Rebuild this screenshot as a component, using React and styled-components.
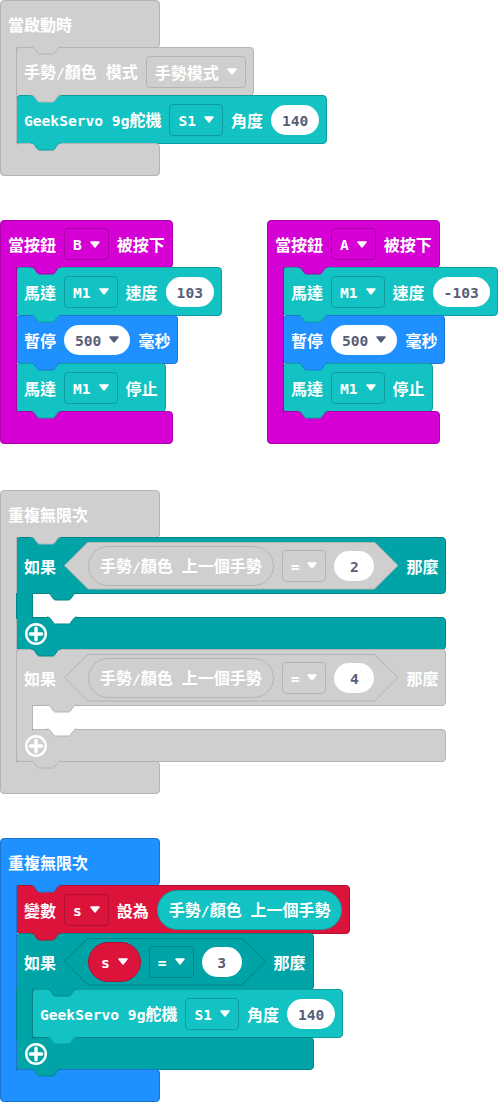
import React from 'react';
import styled, { createGlobalStyle } from 'styled-components';

const GlobalStyle = createGlobalStyle`
  *, *::before, *::after { box-sizing: border-box; }
  html, body { margin: 0; padding: 0; background: #ffffff; }
  body {
    width: 498px;
    height: 1103px;
    overflow: hidden;
    font-family: "Noto Sans CJK TC", "Noto Sans CJK SC", sans-serif;
  }
`;

const palette = {
  grey: { fill: '#cfcfcf', line: '#b4b4b4' },
  servo: { fill: '#13c2c2', line: '#0f9d9d' },
  event: { fill: '#d400d4', line: '#a800a8' },
  loop: { fill: '#1e90ff', line: '#1a76d2' },
  logic: { fill: '#00a4a6', line: '#008486' },
  vars: { fill: '#dc143c', line: '#b0102f' },
};

const INK = '#575e75';

const TAB_FILL = 'M0 0 C2 0 3 1 4 2.5 L6.5 6 C7 6.7 7.7 7 8.5 7 H21.5 C22.3 7 23 6.7 23.5 6 L26 2.5 C27 1 28 0 30 0 Z';
const TAB_EDGE = 'M0 0 C2 0 3 1 4 2.5 L6.5 6 C7 6.7 7.7 7 8.5 7 H21.5 C22.3 7 23 6.7 23.5 6 L26 2.5 C27 1 28 0 30 0';

const CJK = /([\u2e80-\u9fff\uf900-\ufaff\uff00-\uffef]+)/;

const Canvas = styled.div`
  position: relative;
  width: 498px;
  height: 1103px;
`;

// a stack's place on the workspace is the content itself
const Stack = styled.div`
  position: absolute;
  left: ${p => p.$x}px;
  top: ${p => p.$y}px;
`;

const Han = styled.span`
  font-family: "Noto Sans CJK TC", "Noto Sans CJK SC", sans-serif;
  font-size: 16px;
  font-weight: 700;
`;

const Lat = styled.span`
  font-family: "DejaVu Sans Mono", "Liberation Mono", monospace;
  font-size: 14.6px;
  font-weight: 700;
`;

const Label = styled.span`
  display: block;
  flex: none;
  white-space: pre;
  line-height: 20px;
  color: ${p => p.$ink || '#ffffff'};
`;

const CBlock = styled.div`
  display: flex;
  flex-direction: column;
  width: max-content;

  & > * + * { margin-top: -1px; }
`;

const Head = styled.div`
  position: relative;
  display: flex;
  align-items: center;
  gap: 8px;
  height: ${p => p.$h}px;
  min-width: ${p => p.$min || 0}px;
  padding: 0 7px;
  background: ${p => p.$c.fill};
  border: 1px solid ${p => p.$c.line};
  border-radius: 4px 4px 4px 0;
  white-space: nowrap;
`;

const Body = styled.div`
  display: flex;
`;

const Arm = styled.div`
  position: relative;
  z-index: 1;
  flex: none;
  width: 17px;
  margin-bottom: -1px;
  background: ${p => p.$c.fill};
  border-left: 1px solid ${p => p.$c.line};
  border-right: 1px solid ${p => p.$c.line};
`;

const Inner = styled.div`
  width: 0;
  margin-left: -1px;
  display: flex;
  flex-direction: column;
  align-items: flex-start;

  & > * + * { margin-top: -1px; }
`;

const Foot = styled.div`
  position: relative;
  display: flex;
  align-items: center;
  height: 33px;
  padding-left: 8px;
  background: ${p => p.$c.fill};
  border: 1px solid ${p => p.$c.line};
  border-radius: 0 4px 4px 4px;
`;

const Stmt = styled.div`
  position: relative;
  display: flex;
  align-items: center;
  gap: 8px;
  width: max-content;
  height: 49px;
  padding: 0 7px;
  background: ${p => p.$c.fill};
  border: 1px solid ${p => p.$c.line};
  border-radius: 4px;
  white-space: nowrap;
`;

const Slot = styled.div`
  position: relative;
  width: 40px;
  height: 25px;
`;

const TabSvg = styled.svg`
  position: absolute;
  z-index: 2;
  top: ${p => p.$top || '100%'};
  left: ${p => p.$left}px;
  width: 30px;
  height: 8px;
  overflow: visible;
  pointer-events: none;
`;

const Drop = styled.div`
  display: flex;
  align-items: center;
  gap: 8px;
  flex: none;
  height: 32px;
  padding: 0 8px;
  background: ${p => p.$c.fill};
  border: 1px solid ${p => p.$c.line};
  border-radius: 4px;
`;

const Num = styled.div`
  display: flex;
  align-items: center;
  justify-content: center;
  gap: 8px;
  flex: none;
  min-width: 40px;
  height: 30px;
  padding: 0 11px;
  background: #ffffff;
  border-radius: 15px;
`;

const Pill = styled.div`
  display: flex;
  align-items: center;
  gap: 8px;
  flex: none;
  height: 40px;
  padding: 0 ${p => p.$pad}px;
  background: ${p => p.$c.fill};
  border: 1px solid ${p => p.$c.line};
  border-radius: 20px;
`;

const Hex = styled.div`
  position: relative;
  isolation: isolate;
  display: flex;
  align-items: center;
  gap: 8px;
  flex: none;
  height: 48px;
  padding: 0 24px;

  &::before, &::after {
    content: '';
    position: absolute;
    z-index: -1;
  }
  &::before {
    inset: 0;
    background: ${p => p.$c.line};
    clip-path: polygon(0 50%, 24px 0, calc(100% - 24px) 0, 100% 50%, calc(100% - 24px) 100%, 24px 100%);
  }
  &::after {
    inset: 1px;
    background: ${p => p.$c.fill};
    clip-path: polygon(0 50%, 23.4px 0, calc(100% - 23.4px) 0, 100% 50%, calc(100% - 23.4px) 100%, 23.4px 100%);
  }
`;

function Txt({ t, ink }) {
  return (
    <Label $ink={ink}>
      {t.split(CJK).filter(Boolean).map((s, i) =>
        CJK.test(s) ? <Han key={i}>{s}</Han> : <Lat key={i}>{s}</Lat>
      )}
    </Label>
  );
}

function Caret({ color = '#ffffff' }) {
  return (
    <svg width="10" height="7" viewBox="0 0 10 7">
      <path d="M1 1h8L5 6z" fill={color} stroke={color} strokeWidth="1.5" strokeLinejoin="round" />
    </svg>
  );
}

function PlusIcon() {
  return (
    <svg width="22" height="22" viewBox="0 0 22 22">
      <circle cx="11" cy="11" r="9.8" fill="none" stroke="#ffffff" strokeWidth="2.4" />
      <path d="M11 5.3v11.4M5.3 11h11.4" stroke="#ffffff" strokeWidth="3.4" strokeLinecap="round" />
    </svg>
  );
}

function Tab({ c, left = 14, top }) {
  return (
    <TabSvg $left={left} $top={top} viewBox="0 0 30 8">
      <path d={TAB_FILL} fill={c.fill} />
      <path d={TAB_EDGE} fill="none" stroke={c.line} strokeWidth="1" />
    </TabSvg>
  );
}

function Dropdown({ c, t }) {
  return (
    <Drop $c={c}>
      <Txt t={t} />
      <Caret />
    </Drop>
  );
}

function Hat({ c, head, children }) {
  return (
    <CBlock>
      <Head $c={c} $h={48} $min={160}>
        {head}
        <Tab c={c} left={30} />
      </Head>
      <Body>
        <Arm $c={c} />
        <Inner>{children}</Inner>
      </Body>
      <Foot $c={c} />
    </CBlock>
  );
}

function If({ c, cond, children }) {
  return (
    <CBlock>
      <Head $c={c} $h={57}>
        <Txt t="如果" />
        {cond}
        <Txt t="那麼" />
        <Tab c={c} left={30} />
      </Head>
      <Body>
        <Arm $c={c} />
        <Inner>
          {children || (
            <Slot>
              <Tab c={{ fill: '#ffffff', line: c.line }} left={15} top="calc(100% - 1px)" />
            </Slot>
          )}
        </Inner>
      </Body>
      <Foot $c={c}>
        <PlusIcon />
        <Tab c={c} />
      </Foot>
    </CBlock>
  );
}

function Block({ c, children }) {
  return (
    <Stmt $c={c}>
      {children}
      <Tab c={c} />
    </Stmt>
  );
}

function ServoBlock({ c = palette.servo }) {
  return (
    <Block c={c}>
      <Txt t="GeekServo 9g舵機" />
      <Dropdown c={c} t="S1" />
      <Txt t="角度" />
      <Num><Txt t="140" ink={INK} /></Num>
    </Block>
  );
}

function ButtonStack({ x, y, button, speed }) {
  const c = palette.event;
  return (
    <Stack $x={x} $y={y}>
      <Hat
        c={c}
        head={<>
          <Txt t="當按鈕" />
          <Dropdown c={c} t={button} />
          <Txt t="被按下" />
        </>}
      >
        <Block c={palette.servo}>
          <Txt t="馬達" />
          <Dropdown c={palette.servo} t="M1" />
          <Txt t="速度" />
          <Num><Txt t={speed} ink={INK} /></Num>
        </Block>
        <Block c={palette.loop}>
          <Txt t="暫停" />
          <Num>
            <Txt t="500" ink={INK} />
            <Caret color={INK} />
          </Num>
          <Txt t="毫秒" />
        </Block>
        <Block c={palette.servo}>
          <Txt t="馬達" />
          <Dropdown c={palette.servo} t="M1" />
          <Txt t="停止" />
        </Block>
      </Hat>
    </Stack>
  );
}

function GestureCompare({ value }) {
  const g = palette.grey;
  return (
    <Hex $c={g}>
      <Pill $c={g} $pad={11}><Txt t="手勢/顏色 上一個手勢" /></Pill>
      <Dropdown c={g} t="=" />
      <Num><Txt t={value} ink={INK} /></Num>
    </Hex>
  );
}

export default function App() {
  const { grey, servo, loop, logic, vars } = palette;

  return (
    <>
      <GlobalStyle />
      <Canvas>
        <Stack $x={0} $y={0}>
          <Hat c={grey} head={<Txt t="當啟動時" />}>
            <Block c={grey}>
              <Txt t="手勢/顏色 模式" />
              <Dropdown c={grey} t="手勢模式" />
            </Block>
            <ServoBlock />
          </Hat>
        </Stack>

        <ButtonStack x={0} y={220} button="B" speed="103" />
        <ButtonStack x={267} y={220} button="A" speed="-103" />

        <Stack $x={0} $y={490}>
          <Hat c={grey} head={<Txt t="重複無限次" />}>
            <If c={logic} cond={<GestureCompare value="2" />} />
            <If c={grey} cond={<GestureCompare value="4" />} />
          </Hat>
        </Stack>

        <Stack $x={0} $y={838}>
          <Hat c={loop} head={<Txt t="重複無限次" />}>
            <Block c={vars}>
              <Txt t="變數" />
              <Dropdown c={vars} t="s" />
              <Txt t="設為" />
              <Pill $c={servo} $pad={11}><Txt t="手勢/顏色 上一個手勢" /></Pill>
            </Block>
            <If
              c={logic}
              cond={
                <Hex $c={logic}>
                  <Pill $c={vars} $pad={12}>
                    <Txt t="s" />
                    <Caret />
                  </Pill>
                  <Dropdown c={logic} t="=" />
                  <Num><Txt t="3" ink={INK} /></Num>
                </Hex>
              }
            >
              <ServoBlock />
            </If>
          </Hat>
        </Stack>
      </Canvas>
    </>
  );
}
